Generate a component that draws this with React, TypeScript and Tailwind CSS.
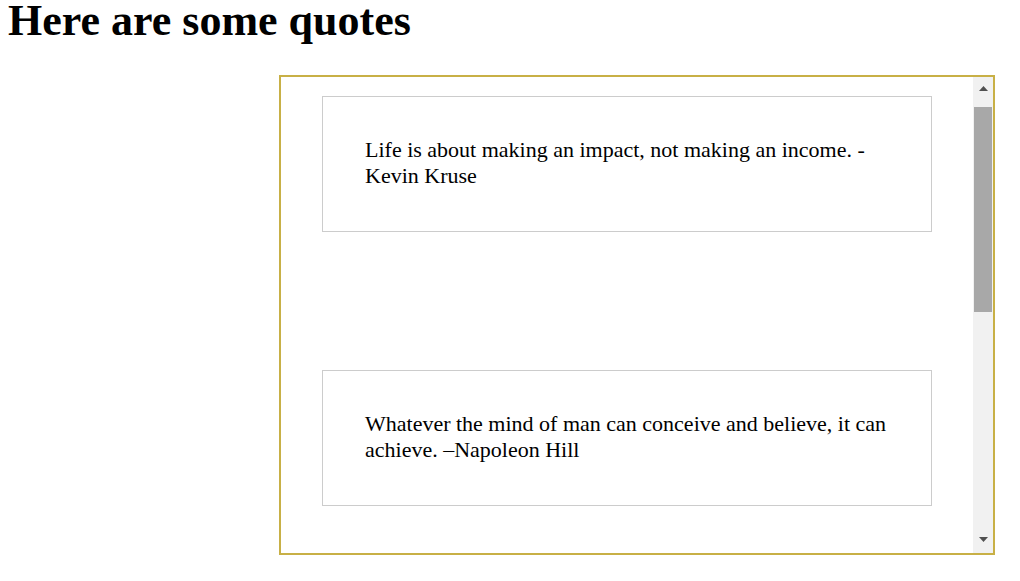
import React from "react";

const quotes = [
  "Life is about making an impact, not making an income. -Kevin Kruse",
  "Whatever the mind of man can conceive and believe, it can achieve. \u2013Napoleon Hill",
];

export default function App() {
  return (
    <div className="w-[1020px] h-[581px] bg-white text-black overflow-hidden" style={{ fontFamily: '"Liberation Serif", "Times New Roman", serif' }}>
      <h1 className="pl-2 pt-[1px] text-[44px] leading-[39px] font-bold">Here are some quotes</h1>
      <div className="mt-[35px] ml-[279px] w-[716px] h-[480px] border-2 border-[#c8b046] flex">
        <div className="flex-1 overflow-hidden pt-[19px] px-[41px] flex flex-col gap-[138px]">
          {quotes.map((q) => (
            <div key={q} className="border border-[#cccccc] pl-[42px] pr-[38px] pt-[40px] pb-[42px] text-[22px] leading-[26px]">
              {q}
            </div>
          ))}
        </div>
        <div className="w-[20px] h-full bg-[#f1f1f1] flex flex-col items-center">
          <svg width="9" height="5" viewBox="0 0 9 5" className="mt-[9px]">
            <polygon points="4.5,0 9,5 0,5" fill="#505050" />
          </svg>
          <div className="mt-[16px] w-[18px] h-[205px] bg-[#a8a8a8]" />
          <div className="flex-1" />
          <svg width="9" height="5" viewBox="0 0 9 5" className="mb-[11px]">
            <polygon points="0,0 9,0 4.5,5" fill="#505050" />
          </svg>
        </div>
      </div>
    </div>
  );
}
